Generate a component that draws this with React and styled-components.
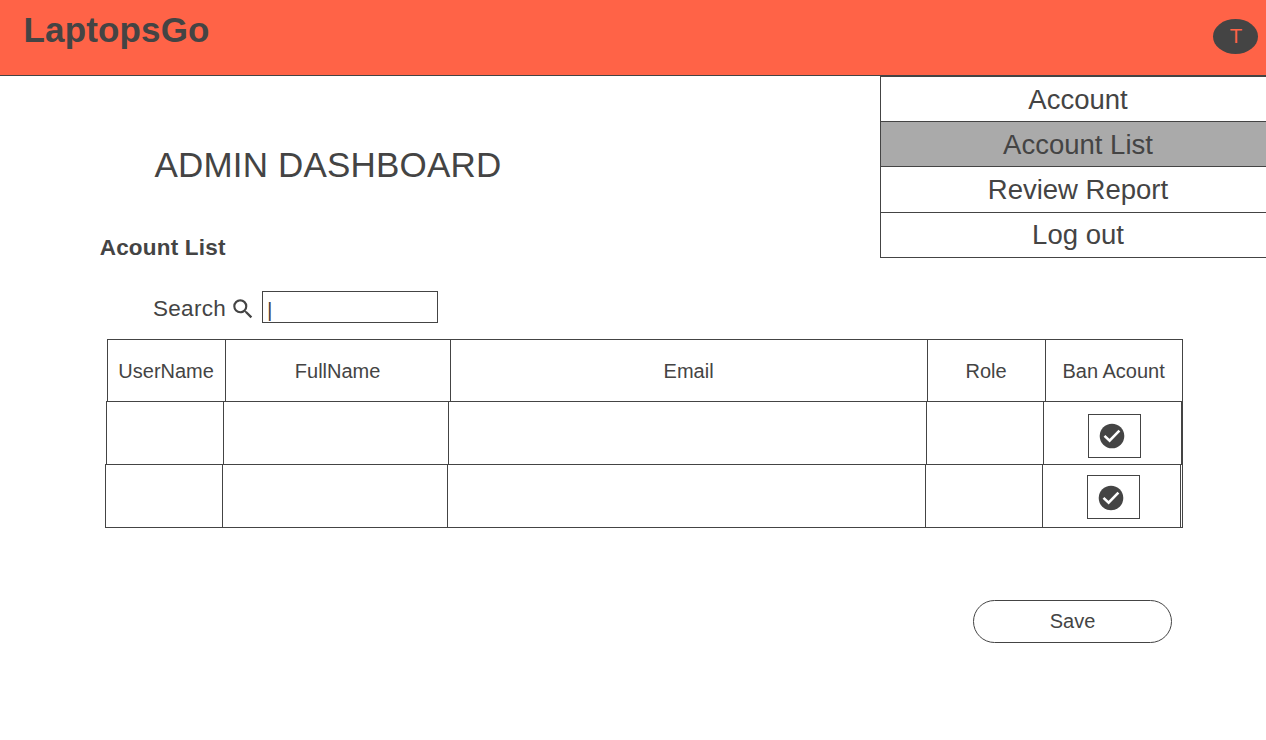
import React from "react";
import styled, { createGlobalStyle } from "styled-components";
import { MdSearch } from "react-icons/md";

const INK = "#444444";
const TOMATO = "#ff6347";

const GlobalStyle = createGlobalStyle`
  *, *::before, *::after { box-sizing: border-box; }
  html, body { margin: 0; overflow: hidden; }
  body {
    background: #ffffff;
    color: ${INK};
    font-family: "Liberation Sans", Arial, sans-serif;
  }
  svg { display: block; }
`;

const Page = styled.div`
  position: relative;
  height: 740px;
  overflow: hidden;
`;

const Header = styled.header`
  display: flex;
  justify-content: space-between;
  align-items: flex-start;
  height: 76px;
  padding: 0 8px 0 23.5px;
  background: ${TOMATO};
  border-bottom: 1px solid ${INK};
`;

const Logo = styled.div`
  margin-top: 10px;
  font-size: 35px;
  font-weight: 700;
  line-height: 40px;
  letter-spacing: 0.15px;
`;

const Avatar = styled.div`
  display: flex;
  align-items: center;
  justify-content: center;
  width: 45px;
  height: 35px;
  margin-top: 19px;
  padding: 0 0 1px 1px;
  border-radius: 50%;
  background: ${INK};
  color: ${TOMATO};
  font-size: 20.5px;
  line-height: 20px;
`;

const Menu = styled.nav`
  position: absolute;
  top: 76px;
  left: 880px;
  width: 396px;
  border: 1px solid ${INK};
  border-bottom: 0;
`;

const MenuItem = styled.a`
  display: flex;
  align-items: center;
  justify-content: center;
  height: ${(p) => p.$height || 45}px;
  border-bottom: 1px solid ${INK};
  background: ${(p) => (p.$active ? "#aaaaaa" : "#ffffff")};
  font-size: 27.5px;
  line-height: 32px;
  padding-top: 1px;
  &:last-child { padding-top: 0; padding-bottom: 1px; }
`;

const Main = styled.main`
  display: flex;
  flex-direction: column;
  align-items: flex-start;
  padding-top: 69px;
`;

const Title = styled.h1`
  margin: 0 0 0 154.5px;
  font-size: 35px;
  font-weight: 400;
  line-height: 40px;
  letter-spacing: 0.18px;
`;

const SectionTitle = styled.h2`
  margin: 50px 0 0 99.7px;
  font-size: 22.5px;
  font-weight: 700;
  line-height: 26px;
  letter-spacing: 0.2px;
`;

const SearchRow = styled.label`
  display: flex;
  align-items: center;
  height: 32px;
  margin: 30px 0 0 153px;
`;

const SearchLabel = styled.span`
  width: 77px;
  padding-top: 4px;
  font-size: 22.5px;
  line-height: 26px;
  letter-spacing: 0.3px;
`;

const SearchIcon = styled(MdSearch)`
  width: 26px;
  height: 26px;
  margin: 4px 6px 0 0;
`;

const SearchField = styled.span`
  width: 176px;
  height: 32px;
  padding: 6px 0 0 4px;
  border: 1px solid ${INK};
  font-size: 21px;
  line-height: 24px;
`;

const Table = styled.section`
  width: 1078px;
  margin: 16px 0 0 105px;
  border-right: 1px solid ${INK};
  border-bottom: 1px solid ${INK};
`;

const Row = styled.div`
  display: grid;
  grid-template-columns: ${(p) => p.$columns};
  height: ${(p) => p.$height}px;
  margin-left: ${(p) => p.$inset}px;
  padding-right: ${(p) => p.$gutter || 0}px;
  border-top: 1px solid ${INK};
`;

const HeadCell = styled.div`
  display: flex;
  align-items: center;
  justify-content: center;
  border-left: 1px solid ${INK};
  padding: 1px 0.8px 0 0;
  font-size: 20px;
  line-height: 24px;
`;

const Cell = styled.div`
  border-left: 1px solid ${INK};
  &:last-child { border-right: 1px solid ${INK}; }
`;

const BanBox = styled.div`
  width: 53px;
  height: 44px;
  margin: ${(p) => p.$top}px 0 0 44px;
  padding: ${(p) => p.$iconTop}px 0 0 9.5px;
  border: 1px solid ${INK};
`;

const CheckIcon = () => (
  <svg width="26" height="26" viewBox="0 0 26 26" fill="none">
    <circle cx="13" cy="13" r="12.3" fill={INK} />
    <path d="M5.5 12.9 10.6 17.7 20.4 7.6" stroke="#fff" strokeWidth="2.6" />
  </svg>
);

const SaveButton = styled.button`
  width: 199px;
  height: 43px;
  margin: 72px 0 0 973px;
  padding: 0 0 2px;
  border: 1px solid ${INK};
  border-radius: 22px;
  background: transparent;
  color: inherit;
  font: 20px/24px "Liberation Sans", Arial, sans-serif;
`;

const bodyColumns = "117px 225px 478px 117px 139px";
const rows = [
  { inset: 1, gutter: 0, boxTop: 12, iconTop: 8 },
  { inset: 0, gutter: 1, boxTop: 10, iconTop: 9 },
];

export default function App() {
  return (
    <Page>
      <GlobalStyle />
      <Header>
        <Logo>LaptopsGo</Logo>
        <Avatar>T</Avatar>
      </Header>
      <Menu>
        <MenuItem>Account</MenuItem>
        <MenuItem $active>Account List</MenuItem>
        <MenuItem $height={46}>Review Report</MenuItem>
        <MenuItem>Log out</MenuItem>
      </Menu>
      <Main>
        <Title>ADMIN DASHBOARD</Title>
        <SectionTitle>Acount List</SectionTitle>
        <SearchRow>
          <SearchLabel>Search</SearchLabel>
          <SearchIcon />
          <SearchField>|</SearchField>
        </SearchRow>
        <Table>
          <Row $columns="118px 225px 477px 118px 137px" $height={62} $inset={2}>
            {["UserName", "FullName", "Email", "Role", "Ban Acount"].map((name) => (
              <HeadCell key={name}>{name}</HeadCell>
            ))}
          </Row>
          {rows.map((row, i) => (
            <Row key={i} $columns={bodyColumns} $height={63} $inset={row.inset} $gutter={row.gutter}>
              <Cell />
              <Cell />
              <Cell />
              <Cell />
              <Cell>
                <BanBox $top={row.boxTop} $iconTop={row.iconTop}>
                  <CheckIcon />
                </BanBox>
              </Cell>
            </Row>
          ))}
        </Table>
        <SaveButton>Save</SaveButton>
      </Main>
    </Page>
  );
}
